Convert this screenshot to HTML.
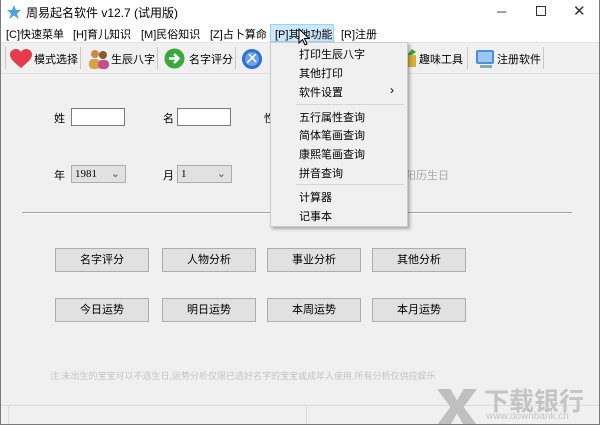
<!DOCTYPE html>
<html><head><meta charset="utf-8"><style>
*{margin:0;padding:0;box-sizing:border-box}
body{width:600px;height:425px;overflow:hidden;background:#f0f0f0;font-family:"Liberation Sans","Noto Sans CJK SC",sans-serif;font-size:11px;color:#000;position:relative}
.a{position:absolute}
.win{position:absolute;left:0;top:0;width:600px;height:425px;border:1px solid #7a7a7a;border-top:none}
.tb{background:#fff;height:22px;left:0;top:0;width:600px}
.mb{background:#fff;height:21px;left:0;top:22px;width:600px;border-bottom:1px solid #e5e5e5}
.btn{position:absolute;width:94px;height:24px;background:#e1e1e1;border:1px solid #adadad;text-align:center;line-height:22px;font-size:11px}
.inp{position:absolute;background:#fff;border:1px solid #7a7a7a;height:18px;width:54px}
.sel{position:absolute;background:#e1e1e1;border:1px solid #adadad;height:18px;width:55px;font-family:"Liberation Serif",serif;font-size:11px;line-height:16px;padding-left:3px}
.sep{position:absolute;top:47px;width:1px;height:22px;background:#c8c8c8}
.mi{position:absolute;left:299px;font-size:11px}
</style></head><body>
<div class="a tb"></div>
<svg class="a" style="left:7px;top:5px" width="14" height="14" viewBox="0 0 14 14"><polygon points="7,0 9,5 14,5 10,8.5 11.5,14 7,10.5 2.5,14 4,8.5 0,5 5,5" fill="#4aa3df"/></svg>
<div class="a" style="left:26px;top:4px;font-size:12px">周易起名软件 v12.7 (试用版)</div>
<div class="a" style="left:497px;top:4px;font-size:13px;color:#333">─</div>
<div class="a" style="left:536px;top:6px;width:10px;height:10px;border:1px solid #333"></div>
<div class="a" style="left:573px;top:2px;font-size:15px;color:#333">✕</div>
<div class="a mb"></div>
<div class="a" style="left:270px;top:24px;width:64px;height:18px;background:#cce8ff;border:1px solid #99d1ff"></div>
<div class="a" style="left:6px;top:26px;font-size:11px;word-spacing:0">[C]快速菜单</div>
<div class="a" style="left:73px;top:26px">[H]育儿知识</div>
<div class="a" style="left:141px;top:26px">[M]民俗知识</div>
<div class="a" style="left:210px;top:26px">[Z]占卜算命</div>
<div class="a" style="left:275px;top:26px">[P]其他功能</div>
<div class="a" style="left:341px;top:26px">[R]注册</div>
<div class="a" style="left:5px;top:47px;width:1px;height:22px;background:#c8c8c8"></div>
<svg class="a" style="left:10px;top:49px" width="22" height="20" viewBox="0 0 22 20"><path d="M11 19 C4 13 0 10 0 5.5 C0 2 3 0 6 0 C8.5 0 10 1.5 11 3 C12 1.5 13.5 0 16 0 C19 0 22 2 22 5.5 C22 10 18 13 11 19Z" fill="#e53b4b"/></svg>
<div class="a" style="left:34px;top:51px;font-size:11px">模式选择</div>
<div class="sep" style="left:80px"></div>
<svg class="a" style="left:88px;top:48px" width="22" height="22" viewBox="0 0 22 22"><circle cx="7" cy="6" r="4" fill="#c98a4a"/><circle cx="15" cy="7" r="4" fill="#8a5a2e"/><rect x="1" y="11" width="11" height="10" rx="4" fill="#d9a24a"/><rect x="10" y="12" width="11" height="9" rx="4" fill="#c44f8a"/></svg>
<div class="a" style="left:111px;top:51px">生辰八字</div>
<div class="sep" style="left:157px"></div>
<svg class="a" style="left:164px;top:48px" width="21" height="21" viewBox="0 0 21 21"><circle cx="10.5" cy="10.5" r="10" fill="#3aa83a"/><path d="M5 10.5H14M10 6L14.5 10.5L10 15" stroke="#fff" stroke-width="2.6" fill="none"/></svg>
<div class="a" style="left:189px;top:51px">名字评分</div>
<div class="sep" style="left:235px"></div>
<svg class="a" style="left:241px;top:48px" width="22" height="22" viewBox="0 0 22 22"><circle cx="11" cy="11" r="10" fill="#2c6fd6"/><circle cx="11" cy="11" r="7" fill="#6aa2ea"/><path d="M6 15L15 6M8 6L15 14" stroke="#fff" stroke-width="1.5"/></svg>
<svg class="a" style="left:404px;top:49px" width="14" height="20" viewBox="0 0 14 20"><path d="M2 6 H12 V18 H2Z" fill="#d9b036"/><path d="M3 6 L8 0 L12 3 L8 6Z" fill="#3aa83a"/></svg>
<div class="a" style="left:419px;top:51px">趣味工具</div>
<div class="sep" style="left:467px"></div>
<svg class="a" style="left:474px;top:48px" width="22" height="22" viewBox="0 0 22 22"><rect x="2" y="2" width="18" height="14" rx="2" fill="#4a8ede"/><rect x="4" y="4" width="14" height="10" fill="#9cc8f2"/><rect x="6" y="17" width="12" height="3" fill="#8aa"/></svg>
<div class="a" style="left:497px;top:51px">注册软件</div>
<div class="sep" style="left:543px"></div>
<div class="a" style="left:0;top:73px;width:600px;height:1px;background:#e0e0e0"></div>

<div class="a" style="left:54px;top:110px;font-size:11px">姓</div>
<div class="inp" style="left:71px;top:108px"></div>
<div class="a" style="left:163px;top:110px">名</div>
<div class="inp" style="left:177px;top:108px"></div>
<div class="a" style="left:264px;top:110px">性</div>
<div class="a" style="left:54px;top:167px">年</div>
<div class="sel" style="left:71px;top:165px">1981<span style="position:absolute;right:5px;top:0;color:#555;font-family:'Liberation Sans'">⌄</span></div>
<div class="a" style="left:163px;top:167px">月</div>
<div class="sel" style="left:177px;top:165px">1<span style="position:absolute;right:5px;top:0;color:#555;font-family:'Liberation Sans'">⌄</span></div>
<div class="a" style="left:405px;top:167px;color:#aaa">阳历生日</div>
<div class="a" style="left:22px;top:212px;width:550px;height:1px;background:#a0a0a0"></div>
<div class="a" style="left:22px;top:213px;width:550px;height:1px;background:#fff"></div>

<div class="btn" style="left:55px;top:248px">名字评分</div>
<div class="btn" style="left:162px;top:248px">人物分析</div>
<div class="btn" style="left:267px;top:248px">事业分析</div>
<div class="btn" style="left:372px;top:248px">其他分析</div>
<div class="btn" style="left:55px;top:298px">今日运势</div>
<div class="btn" style="left:162px;top:298px">明日运势</div>
<div class="btn" style="left:267px;top:298px">本周运势</div>
<div class="btn" style="left:372px;top:298px">本月运势</div>

<div class="a" style="left:50px;top:369px;color:#c4c4c4;font-size:9px;white-space:nowrap">注:未出生的宝宝可以不选生日,运势分析仅限已选好名字的宝宝或成年人使用,所有分析仅供应娱乐</div>
<div class="a" style="left:0;top:405px;width:600px;height:1px;background:#dcdcdc"></div>
<div class="a" style="left:8px;top:406px;width:1px;height:18px;background:#dcdcdc"></div>
<div class="a" style="left:306px;top:406px;width:1px;height:18px;background:#dcdcdc"></div>
<svg class="a" style="left:436px;top:389px" width="42" height="36" viewBox="0 0 42 38"><path d="M0 0H14L21 12L28 0H42L28 19L42 38H28L21 26L14 38H0L14 19Z" fill="#c0c0c0"/></svg>
<div class="a" style="left:484px;top:382px;font-size:25px;font-weight:bold;color:#c4c4c4;letter-spacing:0px">下载银行</div>
<div class="a" style="left:486px;top:411px;font-size:10px;color:#c4c4c4">www.downbank.cn</div>

<div class="a" style="left:270px;top:42px;width:138px;height:185px;background:#f0f0f0;border:1px solid #ccc;box-shadow:2px 2px 3px rgba(0,0,0,.3)"></div>
<div class="mi" style="top:46px">打印生辰八字</div>
<div class="mi" style="top:65px">其他打印</div>
<div class="mi" style="top:84px">软件设置</div>
<div class="a" style="left:390px;top:83px;font-size:12px">›</div>
<div class="a" style="left:296px;top:104px;width:108px;height:1px;background:#d7d7d7"></div>
<div class="mi" style="top:109px">五行属性查询</div>
<div class="mi" style="top:127px">简体笔画查询</div>
<div class="mi" style="top:146px">康熙笔画查询</div>
<div class="mi" style="top:165px">拼音查询</div>
<div class="a" style="left:296px;top:184px;width:108px;height:1px;background:#d7d7d7"></div>
<div class="mi" style="top:189px">计算器</div>
<div class="mi" style="top:208px">记事本</div>
<svg class="a" style="left:298px;top:28px" width="12" height="18" viewBox="0 0 12 18"><path d="M1 1V15L4.5 11.5L7 17L9 16L6.5 10.5H11Z" fill="#fff" stroke="#000" stroke-width="1"/></svg>
<div class="win"></div>
</body></html>
